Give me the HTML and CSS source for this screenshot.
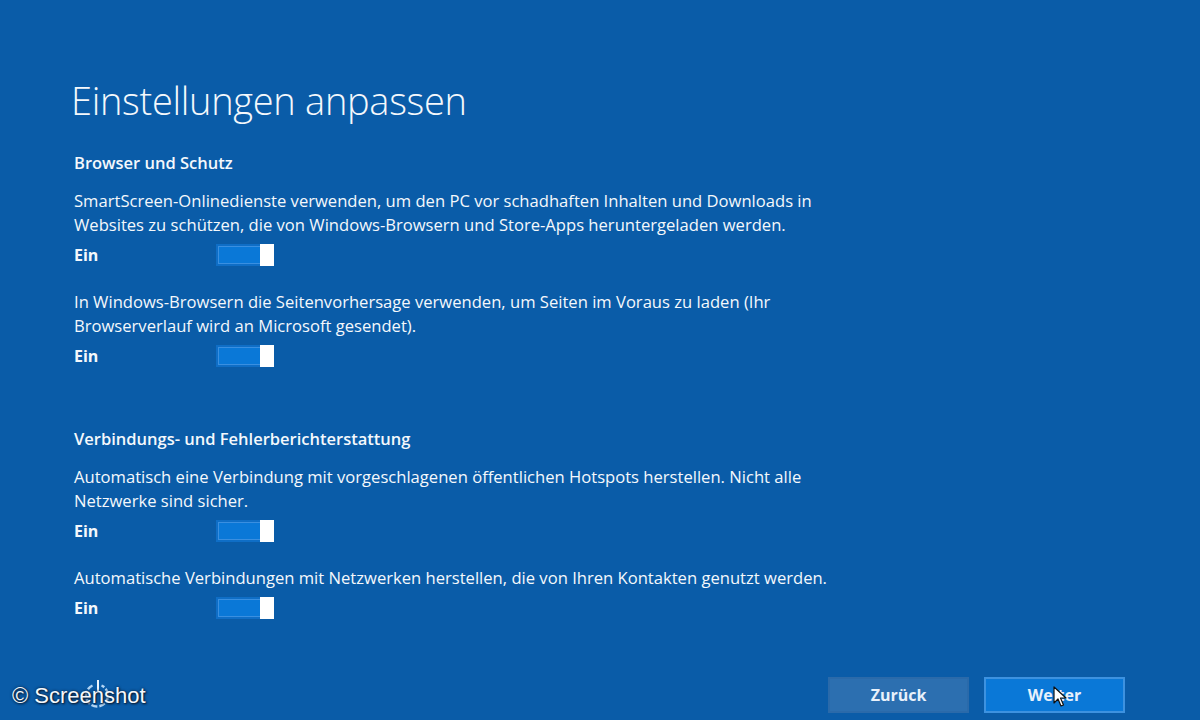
FILE: index.html
```html
<!DOCTYPE html>
<html lang="de">
<head>
    <meta charset="UTF-8">
    <meta name="viewport" content="width=device-width, initial-scale=1.0">
    <title>Einstellungen anpassen</title>
    <link rel="stylesheet" href="styles.css">
</head>
<body>
    <main class="setup">
        <h1>Einstellungen anpassen</h1>

        <section class="group">
            <h2>Browser und Schutz</h2>

            <div class="option">
                <p>SmartScreen-Onlinedienste verwenden, um den PC vor schadhaften Inhalten und Downloads in Websites zu schützen, die von Windows-Browsern und Store-Apps heruntergeladen werden.</p>
                <div class="switch-row">
                    <span class="state">Ein</span>
                    <span class="switch"><span class="thumb"></span></span>
                </div>
            </div>

            <div class="option">
                <p>In Windows-Browsern die Seitenvorhersage verwenden, um Seiten im Voraus zu laden (Ihr Browserverlauf wird an Microsoft gesendet).</p>
                <div class="switch-row">
                    <span class="state">Ein</span>
                    <span class="switch"><span class="thumb"></span></span>
                </div>
            </div>
        </section>

        <section class="group">
            <h2>Verbindungs- und Fehlerberichterstattung</h2>

            <div class="option">
                <p>Automatisch eine Verbindung mit vorgeschlagenen öffentlichen Hotspots herstellen. Nicht alle Netzwerke sind sicher.</p>
                <div class="switch-row">
                    <span class="state">Ein</span>
                    <span class="switch"><span class="thumb"></span></span>
                </div>
            </div>

            <div class="option">
                <p>Automatische Verbindungen mit Netzwerken herstellen, die von Ihren Kontakten genutzt werden.</p>
                <div class="switch-row">
                    <span class="state">Ein</span>
                    <span class="switch"><span class="thumb"></span></span>
                </div>
            </div>
        </section>
    </main>

    <footer class="actions">
        <button class="btn btn-back">Zurück</button>
        <button class="btn btn-next">Weiter</button>
    </footer>

    <!-- power glyph + watermark in the lower left corner -->
    <svg class="power" width="28" height="34" viewBox="0 0 28 34">
        <path d="M9.5 9.5 A11 11 0 1 0 18.5 9.5" fill="none" stroke="#b4d6f5" stroke-width="2.4" stroke-dasharray="6 2"/>
        <line x1="15" y1="4" x2="15" y2="15" stroke="#eef5fc" stroke-width="2"/>
    </svg>
    <div class="watermark">© Screenshot</div>

    <svg class="cursor" width="14" height="22" viewBox="0 0 14 22">
        <path d="M1 1 L1 17 L5 13 L8 20 L10.5 19 L7.5 12 L13 12 Z" fill="#ffffff" stroke="#111111" stroke-width="1.2" stroke-linejoin="round"/>
    </svg>
</body>
</html>
```

FILE: styles.css
```css
:root {
    --background: #0a5ca8;
    --text: #f4f8fc;
    --accent: #0a78d7;
    --accent-border: #3d92e0;
    --back-bg: #2c6fb0;
}

* {
    margin: 0;
    padding: 0;
    box-sizing: border-box;
}

html, body {
    height: 100%;
}

body {
    font-family: 'Open Sans', 'Noto Sans', Arial, sans-serif;
    background-color: var(--background);
    color: var(--text);
    overflow: hidden;
    position: relative;
}

.setup {
    padding: 74px 0 0 74px;
    width: 850px;
}

h1 {
    font-size: 38px;
    font-weight: 300;
    line-height: 52px;
    letter-spacing: -0.3px;
    margin-left: -3px;
    margin-bottom: 26px;
}

.group + .group {
    margin-top: 57px;
}

h2 {
    font-size: 16.5px;
    font-weight: 600;
    line-height: 22px;
    margin-bottom: 15px;
}

.option + .option {
    margin-top: 20px;
}

.option p {
    font-size: 16.6px;
    line-height: 24px;
    max-width: 770px;
}

.switch-row {
    display: flex;
    align-items: center;
    height: 30px;
    margin-top: 3px;
}

.state {
    width: 142px;
    font-size: 16px;
    font-weight: 700;
}

.switch {
    display: flex;
    width: 58px;
    height: 22px;
    background-color: var(--accent);
    box-shadow: inset 0 0 0 2px #0f6ec6, inset 0 0 0 3px #3a8fe0;
}

.thumb {
    margin-left: auto;
    width: 14px;
    height: 22px;
    background-color: #ffffff;
}

.actions {
    position: absolute;
    right: 75px;
    bottom: 7px;
    display: flex;
    gap: 15px;
}

.btn {
    width: 141px;
    height: 36px;
    font-family: 'Open Sans', 'Noto Sans', Arial, sans-serif;
    font-size: 16px;
    font-weight: 700;
    color: #e8f1fb;
    border: 2px solid transparent;
    cursor: pointer;
}

.btn-back {
    background-color: var(--back-bg);
    border-color: #2a6aaa;
}

.btn-next {
    background-color: var(--accent);
    border-color: var(--accent-border);
}

.power {
    position: absolute;
    left: 83px;
    top: 676px;
}

.watermark {
    position: absolute;
    left: 12px;
    bottom: 11px;
    font-family: 'Liberation Sans', Arial, sans-serif;
    font-size: 22px;
    color: #f4f8fc;
    text-shadow: 0 0 3px #0a1a30, 1px 1px 2px #0a1a30;
}

.cursor {
    position: absolute;
    left: 1053px;
    top: 686px;
}
```
